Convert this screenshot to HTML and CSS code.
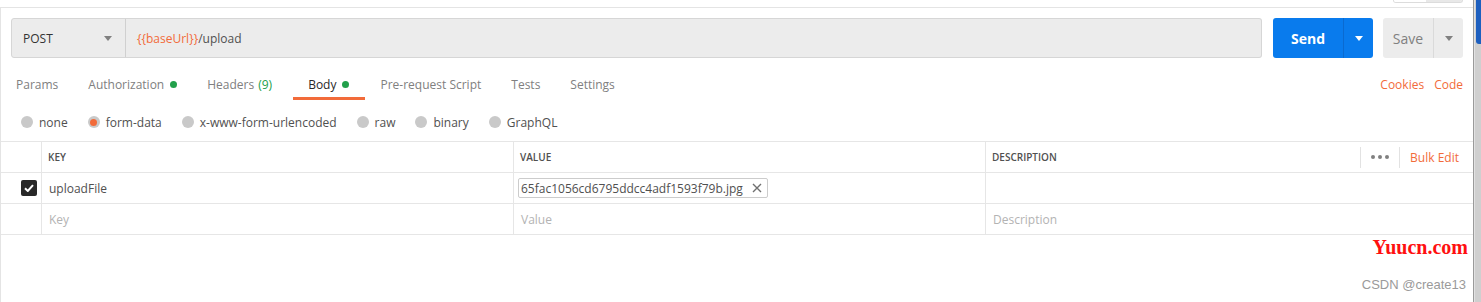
FILE: index.html
```html
<!DOCTYPE html>
<html>
<head>
<meta charset="utf-8">
<title>Postman request</title>
<link rel="stylesheet" href="styles.css">
</head>
<body>
<div class="screen">
  <div class="app">
    <div class="top">
      <div class="top-tab"><span class="tt-a"></span><span class="tt-b"></span></div>
    </div>
    <div class="main">
      <div class="reqbar">
        <div class="method"><span>POST</span><span class="caret"></span></div>
        <div class="url"><span class="var">{{baseUrl}}</span>/upload</div>
        <div class="send"><span class="btn-label">Send</span><span class="btn-drop"><span class="caret caret-white"></span></span></div>
        <div class="save"><span class="btn-label">Save</span><span class="btn-drop"><span class="caret"></span></span></div>
      </div>

      <div class="tabsrow">
        <nav class="tabs">
          <span class="tab">Params</span>
          <span class="tab">Authorization <i class="dot"></i></span>
          <span class="tab tab-headers">Headers <span class="count">(9)</span></span>
          <span class="tab active">Body <i class="dot"></i></span>
          <span class="tab">Pre-request Script</span>
          <span class="tab">Tests</span>
          <span class="tab">Settings</span>
        </nav>
        <div class="links"><span class="link">Cookies</span><span class="link">Code</span></div>
      </div>

      <div class="bodytypes">
        <label class="radio"><span class="circle"></span>none</label>
        <label class="radio"><span class="circle on"></span>form-data</label>
        <label class="radio"><span class="circle"></span>x-www-form-urlencoded</label>
        <label class="radio"><span class="circle"></span>raw</label>
        <label class="radio"><span class="circle"></span>binary</label>
        <label class="radio"><span class="circle"></span>GraphQL</label>
      </div>

      <div class="table">
        <div class="row head">
          <div class="cell chk"></div>
          <div class="cell">KEY</div>
          <div class="cell">VALUE</div>
          <div class="cell desc-head">
            <span>DESCRIPTION</span>
            <div class="head-actions">
              <span class="sep"></span>
              <span class="more"><i></i><i></i><i></i></span>
              <span class="sep"></span>
              <span class="bulk">Bulk Edit</span>
            </div>
          </div>
        </div>
        <div class="row">
          <div class="cell chk"><span class="checkbox"><svg width="10" height="8" viewBox="0 0 10 8"><path d="M1 4.2 L3.8 7 L9 1.2" fill="none" stroke="#fff" stroke-width="2"/></svg></span></div>
          <div class="cell data">uploadFile</div>
          <div class="cell data"><span class="chip">65fac1056cd6795ddcc4adf1593f79b.jpg<svg class="x" width="10" height="10" viewBox="0 0 10 10"><path d="M1 1 L9 9 M9 1 L1 9" stroke="#707070" stroke-width="1.4"/></svg></span></div>
          <div class="cell data"></div>
        </div>
        <div class="row">
          <div class="cell chk"></div>
          <div class="cell data ph">Key</div>
          <div class="cell data ph">Value</div>
          <div class="cell data ph">Description</div>
        </div>
      </div>

      <div class="wm-site">Yuucn.com</div>
      <div class="wm-csdn">CSDN @create13</div>
    </div>
  </div>
  <div class="side"><div class="side-blue"></div></div>
</div>
</body>
</html>
```

FILE: styles.css
```css
* { box-sizing: border-box; }
html, body { margin: 0; padding: 0; background: #fff; }
body {
  font-family: "Open Sans", "Noto Sans", sans-serif;
  font-size: 12px;
  color: #505050;
}
.screen { display: flex; width: 1481px; height: 302px; overflow: hidden; }
.app {
  width: 1474px;
  height: 302px;
  border-right: 1px solid #9a9a9a;
  display: flex;
  flex-direction: column;
}
.side { flex: 1; background: #cfcfcf; border-left: 1px solid #e2e2e2; }
.side-blue { height: 44px; margin-left: 1px; background: #1d5fbf; border-bottom-left-radius: 3px; }

.top {
  height: 8px;
  border-bottom: 1px solid #e4e4e4;
  display: flex;
  justify-content: flex-end;
  padding-right: 10px;
}
.top-tab { display: flex; height: 3px; width: 70px; border: 1px solid #dcdcdc; border-top: 0; border-radius: 0 0 3px 3px; overflow: hidden; }
.tt-a { width: 32px; background: #fff; }
.tt-b { flex: 1; background: #e8e8e8; }

.main {
  position: relative;
  flex: 1;
  border-left: 1px solid #e4e4e4;
}

/* request bar */
.reqbar {
  display: flex;
  padding: 10px 10px 0 10px;
  height: 50px;
}
.method {
  width: 115px;
  height: 40px;
  background: #ececec;
  border: 1px solid #d6d6d6;
  border-radius: 3px 0 0 3px;
  display: flex;
  align-items: center;
  justify-content: space-between;
  padding: 0 13px 0 11px;
  color: #333;
}
.url {
  flex: 1;
  height: 40px;
  background: #ececec;
  border: 1px solid #d6d6d6;
  border-left: 1px solid #d0d0d0;
  border-radius: 0 3px 3px 0;
  margin-left: -1px;
  display: flex;
  align-items: center;
  padding-left: 11px;
  color: #505050;
}
.var { color: #f26b3a; }
.caret {
  width: 0; height: 0;
  border-left: 4px solid transparent;
  border-right: 4px solid transparent;
  border-top: 5px solid #808080;
}
.caret-white { border-top-color: #fff; }
.send, .save {
  height: 40px;
  border-radius: 3px;
  display: flex;
  font-size: 14px;
}
.send { width: 100px; margin-left: 11px; background: #097bed; color: #fff; font-weight: 700; }
.save { width: 80px; margin-left: 10px; background: #ececec; color: #808080; }
.btn-label { flex: 1; display: flex; align-items: center; justify-content: center; }
.btn-drop { width: 30px; display: flex; align-items: center; justify-content: center; border-left: 1px solid #0a6ad0; }
.save .btn-drop { border-left-color: #dadada; }

/* tabs */
.tabsrow {
  display: flex;
  justify-content: space-between;
  margin-top: 14px;
  height: 28px;
  padding-right: 10px;
}
.tabs { display: flex; }
.tab {
  padding: 0 15px;
  line-height: 25px;
  height: 28px;
  color: #808080;
  border-bottom: 3px solid transparent;
  display: flex;
  align-items: center;
  white-space: nowrap;
}
.tab.tab-headers { padding-right: 21px; }
.tab.active { color: #282828; border-bottom-color: #f26b3a; padding-right: 16px; }
.dot { display: inline-block; width: 7px; height: 7px; border-radius: 50%; background: #22a04b; margin-left: 6px; }
.count { color: #22a04b; margin-left: 4px; }
.links { display: flex; gap: 10px; line-height: 25px; }
.link { color: #f26b3a; }

/* body types */
.bodytypes {
  display: flex;
  align-items: center;
  height: 20px;
  margin: 12px 0 9px 0;
  padding-left: 20px;
  gap: 20px;
  color: #505050;
}
.radio { display: flex; align-items: center; gap: 6px; white-space: nowrap; }
.circle {
  width: 12px; height: 12px;
  border-radius: 50%;
  background: #c9c9c9;
  display: flex; align-items: center; justify-content: center;
}
.circle.on::after { content: ""; width: 7px; height: 7px; border-radius: 50%; background: #f26b3a; }

/* table */
.table { border-top: 1px solid #e6e6e6; }
.row {
  display: grid;
  grid-template-columns: 41px 472px 472px 1fr;
  height: 31px;
  border-bottom: 1px solid #e6e6e6;
}
.cell {
  border-right: 1px solid #e6e6e6;
  display: flex;
  align-items: center;
  padding-left: 7px;
  white-space: nowrap;
}
.cell:last-child { border-right: 0; }
.head .cell { padding-left: 6px; font-size: 10px; font-weight: 600; color: #505050; }
.data { color: #505050; }
.ph { color: #b3b3b3; }
.cell.chk { justify-content: flex-start; padding-left: 2px; }
.checkbox {
  width: 16px; height: 16px;
  background: #282828;
  border-radius: 2px;
  display: flex; align-items: center; justify-content: center;
  margin-left: 18px;
}
.chip {
  display: inline-flex;
  align-items: center;
  height: 20px;
  border: 1px solid #cccccc;
  border-radius: 2px;
  padding: 0 5px 0 2px;
  margin-left: -3px;
  gap: 9px;
}
.desc-head { justify-content: space-between; padding-right: 14px; }
.head-actions { display: flex; align-items: center; height: 100%; }
.sep { width: 1px; height: 21px; background: #e2e2e2; }
.more { display: flex; gap: 3px; padding: 0 10px; width: 38px; justify-content: center; }
.more i { width: 4px; height: 4px; border-radius: 50%; background: #808080; }
.bulk { color: #f26b3a; font-size: 12px; font-weight: 400; margin-left: 10px; }

/* watermarks (overlay) */
.wm-site {
  position: absolute;
  right: 5px;
  top: 227px;
  font-family: "Liberation Serif", "DejaVu Serif", serif;
  font-weight: 700;
  font-size: 20px;
  color: #ff1010;
  line-height: 24px;
}
.wm-csdn {
  position: absolute;
  right: 7px;
  top: 269px;
  font-family: "Liberation Sans", Arial, sans-serif;
  font-size: 13px;
  color: #9a9a9a;
  line-height: 16px;
}
```
